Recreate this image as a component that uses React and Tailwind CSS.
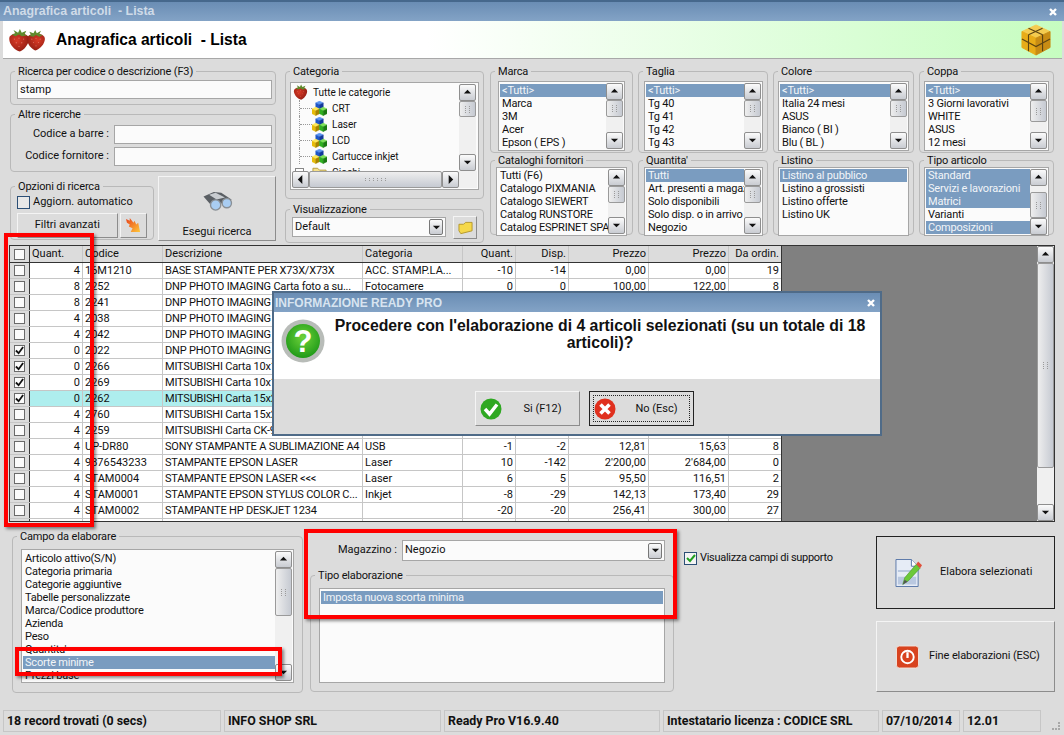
import React from "react";

const raised = "border border-t-[#f4f4f4] border-l-[#f4f4f4] border-r-[#8c8c8c] border-b-[#8c8c8c] bg-[#dcdcdc]";

function Strawberry({ className, id = "sb", flip }) {
  return (
    <svg viewBox="0 0 24 26" className={className}>
      <defs>
        <radialGradient id={id} cx="40%" cy="40%" r="70%">
          <stop offset="0%" stopColor="#d93a26" />
          <stop offset="100%" stopColor="#8e1c12" />
        </radialGradient>
      </defs>
      <g transform={flip ? "translate(24 0) scale(-1 1)" : undefined}>
        <path d="M2 9C6 4 18 4 22 9C25 15 18 24 13 25.500C7 25 -1 15 2 9Z" fill={`url(#${id})`} />
        <g fill="#f0a090" opacity="0.55">
          <circle cx="7" cy="12" r="0.700" /><circle cx="12" cy="11" r="0.700" /><circle cx="17" cy="12" r="0.700" />
          <circle cx="9" cy="16" r="0.700" /><circle cx="15" cy="16" r="0.700" /><circle cx="12" cy="20" r="0.700" />
        </g>
        <path d="M4 7L8 6L6 2L11 5L13 1L15 5L20 3L18 7L21 8L15 9L12 7L8 9Z" fill="#5e8a2c" />
      </g>
    </svg>
  );
}

function Cubes({ className }) {
  const cube = (x, y, a, b, c) => (
    <g transform={`translate(${x} ${y})`} strokeLinejoin="round">
      <path d="M0 2L4 0L8 2L4 4Z" fill={a} stroke={a} strokeWidth="0.500" />
      <path d="M0 2L4 4L4 9L0 7Z" fill={b} stroke={b} strokeWidth="0.500" />
      <path d="M8 2L4 4L4 9L8 7Z" fill={c} stroke={c} strokeWidth="0.500" />
    </g>
  );
  return (
    <svg viewBox="0 0 16 16" className={className}>
      {cube(4, 0, "#5a94f0", "#1f57c8", "#12389a")}
      {cube(0, 6.500, "#ffe85a", "#e8bc08", "#a88400")}
      {cube(8, 6.500, "#7fe05a", "#2fb020", "#1a7a12")}
    </svg>
  );
}

function Arrow({ dir }) {
  const d = { up: "M1 6L5 2L9 6Z", down: "M1 3L5 7L9 3Z", left: "M7 0L2 5L7 10Z", right: "M3 0L8 5L3 10Z" }[dir];
  return (
    <svg viewBox="0 0 10 10" className="w-[9px] h-[9px]">
      <path d={d} fill="#111" />
    </svg>
  );
}

function ScrollBtn({ dir, className = "w-full h-[17px]" }) {
  return (
    <div className={`${className} shrink-0 flex items-center justify-center rounded-[2px] border border-[#8e8e8e] bg-gradient-to-b from-[#fbfbfb] to-[#c9ccd2]`}>
      <Arrow dir={dir} />
    </div>
  );
}

function Dots({ wide }) {
  return (
    <div className={`grid gap-[1px] ${wide ? "grid-cols-6" : "grid-cols-2"}`}>
      {Array.from({ length: wide ? 12 : 8 }).map((_, i) => (
        <span key={i} className="w-[1px] h-[1px] bg-[#9a9a9a] mx-[1px]" />
      ))}
    </div>
  );
}

function VScroll({ top = "h-0", thumb = "h-[16px]", className = "w-[17px]" }) {
  return (
    <div className={`${className} shrink-0 flex flex-col bg-[#f0f0f0]`}>
      <ScrollBtn dir="up" />
      <div className={`${top} shrink-0`} />
      <div className={`${thumb} shrink-0 flex items-center justify-center rounded-[2px] border border-[#9a9a9a] bg-gradient-to-r from-[#eeeeee] to-[#c6cad2]`}>
        <Dots />
      </div>
      <div className="flex-1" />
      <ScrollBtn dir="down" />
    </div>
  );
}

function Group({ title, className = "", inner = "", children }) {
  return (
    <fieldset className={`border border-[#b9b9b9] rounded-[4px] min-w-0 ${className}`}>
      <legend className="ml-[4px] px-[3px] h-[13px] leading-[13px] text-[#111] tracking-[-0.15px]">{title}</legend>
      <div className={inner}>{children}</div>
    </fieldset>
  );
}

function ListBox({ items, selected = [], scroll, className = "", tight }) {
  return (
    <div className={`flex border border-[#a6a6a6] bg-[#fbfbfb] p-[1px] overflow-hidden tracking-[-0.2px] ${className}`}>
      <div className={`flex-1 min-w-0 overflow-hidden ${tight ? "" : "pt-[1px]"}`}>
        {items.map((t, i) => (
          <div
            key={i}
            className={`h-[13px] leading-[13px] pl-[2px] whitespace-nowrap overflow-hidden ${selected.includes(i) ? "bg-[#7a9cc0] text-[#f2f5f8]" : "text-[#111]"}`}
          >
            {t}
          </div>
        ))}
      </div>
      {scroll}
    </div>
  );
}

function Input({ value = "", className = "" }) {
  return <div className={`h-[19px] border border-[#a6a6a6] bg-[#fbfbfb] px-[2px] leading-[17px] ${className}`}>{value}</div>;
}

function Select({ value, className = "" }) {
  return (
    <div className={`flex items-center justify-between border border-[#a6a6a6] bg-[#fbfbfb] pl-[2px] pr-[2px] ${className}`}>
      <span>{value}</span>
      <div className="w-[14px] h-[16px] rounded-[2px] border border-[#777] bg-gradient-to-b from-[#fbfbfb] to-[#c9ccd2] flex items-center justify-center">
        <Arrow dir="down" />
      </div>
    </div>
  );
}

function TreeRow({ label }) {
  return (
    <div className="h-[16px] flex items-center pl-[7px]">
      <span className="w-[13px] h-full border-l border-dotted border-[#999] flex items-center">
        <span className="w-full border-t border-dotted border-[#999]" />
      </span>
      <Cubes className="w-[15px] h-[15px]" />
      <span className="ml-[5px]">{label}</span>
    </div>
  );
}

function CategoryTree() {
  return (
    <div className="mx-[4px] mt-[4px] h-[108px] border border-[#a6a6a6] bg-[#fbfbfb] p-[1px] flex flex-col text-[10px] overflow-hidden">
      <div className="flex flex-1 min-h-0">
        <div className="flex-1 overflow-hidden">
          <div className="h-[16px] flex items-center pl-[1px]">
            <Strawberry id="sb2" className="w-[15px] h-[16px]" />
            <span className="ml-[5px]">Tutte le categorie</span>
          </div>
          <TreeRow label="CRT" />
          <TreeRow label="Laser" />
          <TreeRow label="LCD" />
          <TreeRow label="Cartucce inkjet" />
          <div className="h-[16px] flex items-center pl-[3px]">
            <span className="w-[9px] h-[9px] mr-[8px] border border-[#888] bg-white" />
            <svg viewBox="0 0 16 14" className="w-[15px] h-[14px]"><path d="M1 3H6L8 5H15V13H1Z" fill="#f5e08a" stroke="#b39a3c" /></svg>
            <span className="ml-[5px]">Giochi</span>
          </div>
        </div>
        <VScroll className="w-[17px] mr-[1px]" thumb="h-[16px]" />
      </div>
      <div className="h-[17px] shrink-0 flex bg-[#f0f0f0]">
        <ScrollBtn dir="left" className="w-[17px] h-[17px]" />
        <div className="flex-1 flex items-center justify-center rounded-[2px] border border-[#9a9a9a] bg-gradient-to-b from-[#eeeeee] to-[#c6cad2]">
          <Dots wide />
        </div>
        <ScrollBtn dir="right" className="w-[17px] h-[17px]" />
        <div className="w-[18px]" />
      </div>
    </div>
  );
}

const rows = [
  { q: 4, c: "16M1210", d: "BASE STAMPANTE PER X73X/X73X", cat: "ACC. STAMP.LA...", a: "-10", b: "-14", p1: "0,00", p2: "0,00", o: "19" },
  { q: 8, c: "2252", d: "DNP PHOTO IMAGING Carta foto a su...", cat: "Fotocamere", a: "0", b: "0", p1: "100,00", p2: "122,00", o: "8" },
  { q: 8, c: "2241", d: "DNP PHOTO IMAGING Carta foto a su..." },
  { q: 4, c: "2038", d: "DNP PHOTO IMAGING Carta foto a su..." },
  { q: 4, c: "2042", d: "DNP PHOTO IMAGING Carta foto a su..." },
  { q: 0, c: "2022", d: "DNP PHOTO IMAGING Carta foto a su...", on: true },
  { q: 0, c: "2266", d: "MITSUBISHI Carta 10x15", on: true },
  { q: 0, c: "2269", d: "MITSUBISHI Carta 10x15", on: true },
  { q: 0, c: "2262", d: "MITSUBISHI Carta 15x20", on: true, hi: true },
  { q: 4, c: "2760", d: "MITSUBISHI Carta 15x20" },
  { q: 4, c: "2259", d: "MITSUBISHI Carta CK-9046" },
  { q: 4, c: "UP-DR80", d: "SONY STAMPANTE A SUBLIMAZIONE A4", cat: "USB", a: "-1", b: "-2", p1: "12,81", p2: "15,63", o: "8" },
  { q: 4, c: "9876543233", d: "STAMPANTE EPSON LASER", cat: "Laser", a: "10", b: "-142", p1: "2'200,00", p2: "2'684,00", o: "0" },
  { q: 4, c: "STAM0004", d: "STAMPANTE EPSON LASER <<<", cat: "Laser", a: "6", b: "5", p1: "95,50", p2: "116,51", o: "2" },
  { q: 4, c: "STAM0001", d: "STAMPANTE EPSON STYLUS COLOR C...", cat: "Inkjet", a: "-8", b: "-29", p1: "142,13", p2: "173,40", o: "29" },
  { q: 4, c: "STAM0002", d: "STAMPANTE HP DESKJET 1234", cat: "", a: "-20", b: "-20", p1: "256,41", p2: "300,00", o: "27" },
];

function Check({ on }) {
  return (
    <div className="w-[11px] h-[11px] mx-auto border border-[#6a6a6a] bg-[#fbfbfb] flex items-center justify-center">
      {on && (
        <svg viewBox="0 0 10 10" className="w-[9px] h-[9px]">
          <path d="M1 5L4 8L9 1" fill="none" stroke="#111" strokeWidth="2" />
        </svg>
      )}
    </div>
  );
}

const cols = "grid grid-cols-[20px_53px_80px_200px_100px_53px_53px_80px_80px_53px]";
const cell = "border-r border-[#c6c6c6] px-[2px] whitespace-nowrap overflow-hidden";

function Grid() {
  return (
    <div className="mx-[9px] h-[277px] shrink-0 border border-[#333] bg-[#808080] flex">
      <div className="w-[772px] shrink-0 bg-white overflow-hidden border-r border-[#333]">
        <div className={`${cols} h-[16px] leading-[15px] bg-[#dcdcdc] border-b border-[#333] box-content`}>
          <div className="border-r border-[#333] flex items-center"><Check /></div>
          <div className={`${cell}`}>Quant.</div>
          <div className={`${cell}`}>Codice</div>
          <div className={`${cell}`}>Descrizione</div>
          <div className={`${cell}`}>Categoria</div>
          <div className={`${cell} text-right`}>Quant.</div>
          <div className={`${cell} text-right`}>Disp.</div>
          <div className={`${cell} text-right`}>Prezzo</div>
          <div className={`${cell} text-right`}>Prezzo</div>
          <div className={`${cell} text-right`}>Da ordin.</div>
        </div>
        {rows.map((r, i) => (
          <div key={i} className={`${cols} h-[16px] leading-[15px] border-b border-[#c6c6c6] ${r.hi ? "bg-[#aeeeee]" : ""}`}>
            <div className="bg-[#dcdcdc] border-r border-[#333] flex items-center"><Check on={r.on} /></div>
            <div className={`${cell} text-right`}>{r.q}</div>
            <div className={cell}>{r.c}</div>
            <div className={`${cell} tracking-[-0.2px]`}>{r.d}</div>
            <div className={cell}>{r.cat}</div>
            <div className={`${cell} text-right`}>{r.a}</div>
            <div className={`${cell} text-right`}>{r.b}</div>
            <div className={`${cell} text-right`}>{r.p1}</div>
            <div className={`${cell} text-right`}>{r.p2}</div>
            <div className={`${cell} text-right`}>{r.o}</div>
          </div>
        ))}
        <div className={`${cols} h-[4px]`}>
          <div className="bg-[#dcdcdc] border-r border-[#333]" />
          {Array.from({ length: 9 }).map((_, i) => <div key={i} className="border-r border-[#c6c6c6]" />)}
        </div>
      </div>
      <div className="flex-1" />
      <VScroll className="w-[17px]" thumb="h-[205px]" />
    </div>
  );
}

function Dialog() {
  return (
    <div className="absolute left-[272px] top-[291px] w-[610px] h-[145px] border-2 border-[#4f6b88] flex flex-col bg-[#dcdcdc]">
      <div className="h-[19px] shrink-0 flex items-center justify-between pl-[1px] pr-[4px] bg-gradient-to-b from-[#6a8db4] to-[#83a3c6]">
        <span className="font-bold text-[12px] text-[#d8e4f0] font-['Liberation_Sans',sans-serif]">INFORMAZIONE READY PRO</span>
        <svg viewBox="0 0 10 10" className="w-[10px] h-[10px]"><path d="M2 2L8 8M8 2L2 8" stroke="#fff" strokeWidth="2.4" /></svg>
      </div>
      <div className="h-[67px] shrink-0 bg-white flex">
        <svg viewBox="0 0 44 44" className="w-[44px] h-[44px] ml-[7px] mt-[7px] shrink-0">
          <defs>
            <radialGradient id="qg" cx="50%" cy="40%" r="60%">
              <stop offset="0%" stopColor="#6ed23a" />
              <stop offset="100%" stopColor="#1f9a18" />
            </radialGradient>
          </defs>
          <circle cx="22" cy="22" r="21.5" fill="#b8bcb8" />
          <circle cx="22" cy="22" r="17" fill="url(#qg)" />
          <text x="22" y="33" textAnchor="middle" fontSize="31" fontWeight="bold" fill="#fff" fontFamily="Liberation Sans">?</text>
        </svg>
        <div className="flex-1 pl-[4px] pr-[9px] pt-[5px] text-center font-bold text-[15.8px] leading-[17px] text-[#111] font-['Liberation_Sans',sans-serif]">
          Procedere con l'elaborazione di 4 articoli selezionati (su un totale di 18 articoli)?
        </div>
      </div>
      <div className="flex-1 flex justify-center gap-[9px] pt-[12px] pl-[14px]">
        <div className={`${raised} w-[105px] h-[35px] flex items-center pl-[4px]`}>
          <svg viewBox="0 0 22 22" className="w-[22px] h-[22px]">
            <circle cx="11" cy="11" r="10.5" fill="#2fa822" />
            <path d="M5 11L9.5 16L17 6.5" fill="none" stroke="#fff" strokeWidth="3.4" />
          </svg>
          <span className="ml-[22px] mt-[1px]">Si (F12)</span>
        </div>
        <div className="w-[105px] h-[35px] border border-[#222] bg-[#dcdcdc] p-[3px]">
          <div className="h-full border border-dotted border-[#222] flex items-center">
            <svg viewBox="0 0 22 22" className="w-[22px] h-[22px]">
              <circle cx="11" cy="11" r="10.5" fill="#e0301e" />
              <path d="M6.5 6.5L15.5 15.5M15.5 6.5L6.5 15.5" stroke="#fff" strokeWidth="3.6" />
            </svg>
            <span className="ml-[20px] mt-[2px]">No (Esc)</span>
          </div>
        </div>
      </div>
    </div>
  );
}

const redBox = "absolute border-[4px] border-[#ff0000] shadow-[2px_2px_3px_rgba(0,0,0,0.45)]";

export default function App() {
  return (
    <div className="relative w-[1064px] h-[735px] overflow-hidden bg-[#dcdcdc] text-[#111] text-[11px] font-['Roboto',sans-serif] flex flex-col">
      {/* Title bar */}
      <div className="h-[21px] shrink-0 flex items-center justify-between pl-[3px] pr-[6px] border-t-2 border-[#46688c] bg-gradient-to-b from-[#6a8db4] to-[#83a3c6]">
        <span className="font-bold text-[12.4px] text-[#cfdbe8] font-['Liberation_Sans',sans-serif]">Anagrafica articoli&nbsp; - Lista</span>
        <svg viewBox="0 0 10 10" className="w-[10px] h-[10px]"><path d="M2 2L8 8M8 2L2 8" stroke="#fff" strokeWidth="2.4" /></svg>
      </div>

      {/* Header */}
      <div className="h-[38px] shrink-0 ml-[3px] mr-[2px] flex items-center border-b border-[#a8a8a8] bg-gradient-to-r from-white from-[40%] to-[#c6fdc0]">
        <Strawberry id="sb3" className="w-[22px] h-[24px] ml-[5px]" />
        <Strawberry id="sb4" flip className="w-[20px] h-[22px] -ml-[4px]" />
        <span className="ml-[10px] font-bold text-[15.6px] text-black font-['Liberation_Sans',sans-serif]">Anagrafica articoli&nbsp; - Lista</span>
        <svg viewBox="0 0 32 34" className="ml-auto mr-[11px] w-[30px] h-[32px]">
          <path d="M16 1L31 8L16 15L1 8Z" fill="#f4cc50" stroke="#f4cc50" strokeLinejoin="round" />
          <path d="M1 8L16 15L16 33L1 25Z" fill="#e8ac18" stroke="#e8ac18" strokeLinejoin="round" />
          <path d="M31 8L16 15L16 33L31 25Z" fill="#c88c14" stroke="#c88c14" strokeLinejoin="round" />
          <path d="M8 4.500L23 11.500M23 4.500L8 11.500M8 11.500V29M23 11.500V29M1 16L16 24L31 16" stroke="#5c4412" strokeWidth="1.200" fill="none" />
        </svg>
      </div>

      {/* Filters */}
      <div className="h-[186px] shrink-0 flex pl-[10px] pt-[6px]">
        <div className="w-[266px] shrink-0 flex flex-col gap-[3px]">
          <Group title="Ricerca per codice o descrizione (F3)" className="h-[40px]" inner="px-[6px]">
            <Input value="stamp" className="mt-[2px] w-[255px]" />
          </Group>
          <Group title="Altre ricerche" className="h-[64px]" inner="pr-[3px]">
            <div className="mt-[4px] flex items-center justify-end gap-[5px]">
              <span>Codice a barre :</span>
              <Input className="w-[158px]" />
            </div>
            <div className="mt-[3px] flex items-center justify-end gap-[5px]">
              <span>Codice fornitore :</span>
              <Input className="w-[158px]" />
            </div>
          </Group>
          <div className="flex gap-[4px] mt-[1px] items-end">
            <Group title="Opzioni di ricerca" className="w-[144px] h-[60px]" inner="px-[6px]">
              <div className="flex items-center gap-[3px] mt-[1px]">
                <div className="w-[13px] h-[13px] border border-[#2c4f76] bg-[#e8e8e8]" />
                <span>Aggiorn. automatico</span>
              </div>
              <div className="flex gap-[2px] mt-[2px]">
                <div className={`${raised} w-[103px] h-[25px] flex items-center justify-center`}>Filtri avanzati</div>
                <div className={`${raised} w-[28px] h-[25px] flex items-center justify-center`}>
                  <svg viewBox="0 0 16 16" className="w-[15px] h-[15px]">
                    <defs>
                      <linearGradient id="fl" x1="0" y1="0" x2="1" y2="1">
                        <stop offset="0%" stopColor="#e8401a" />
                        <stop offset="100%" stopColor="#ffc83a" />
                      </linearGradient>
                    </defs>
                    <path d="M0 1L4 3L4 0L8 5L9 3L11 7L13 5L15 15L5 15L7 11L3 9L4 7L1 5Z" fill="url(#fl)" />
                  </svg>
                </div>
              </div>
            </Group>
            <div className={`${raised} w-[118px] h-[65px] flex flex-col items-center pt-[14px] -mb-[1px]`}>
              <svg viewBox="0 0 32 22" className="w-[31px] h-[21px]">
                <path d="M1 6L12 1L20 2L31 9L29 13L8 14Z" fill="#5a5f64" />
                <path d="M7 4L14 2L24 7L15 9Z" fill="#c8ccd0" />
                <circle cx="14" cy="15" r="5.500" fill="#a9cdf2" stroke="#8a9096" strokeWidth="1.500" />
                <circle cx="26" cy="13" r="5" fill="#a9cdf2" stroke="#8a9096" strokeWidth="1.500" />
              </svg>
              <span className="mt-[12px]">Esegui ricerca</span>
            </div>
          </div>
        </div>

        <div className="w-[199px] shrink-0 ml-[9px] flex flex-col gap-[4px]">
          <Group title="Categoria" className="h-[134px]">
            <CategoryTree />
          </Group>
          <Group title="Visualizzazione" className="h-[40px]" inner="px-[6px]">
            <div className="flex items-start gap-[7px]">
              <Select value="Default" className="w-[155px] h-[20px] mt-[1px]" />
              <div className={`${raised} w-[24px] h-[23px] flex items-center justify-center`}>
                <svg viewBox="0 0 16 14" className="w-[15px] h-[14px]"><path d="M1 3H6L8 1H15V10L3 13L1 10Z" fill="#f5d84a" stroke="#b3962c" /></svg>
              </div>
            </div>
          </Group>
        </div>

        <div className="ml-[6px] w-[565px] shrink-0 grid grid-cols-[143px_130px_141px_135px] grid-rows-[89px_87px] gap-x-[5px] gap-y-[0px]">
          <Group title="Marca" className="h-[88px]" inner="px-[7px]">
            <ListBox className="h-[70px] mt-[3px]" items={["<Tutti>", "Marca", "3M", "Acer", "Epson ( EPS )"]} selected={[0]} scroll={<VScroll top="h-0" thumb="h-[17px]" />} />
          </Group>
          <Group title="Taglia" className="h-[88px]" inner="px-[4px]">
            <ListBox className="h-[70px] mt-[3px] ml-[1px]" items={["<Tutti>", "Tg 40", "Tg 41", "Tg 42", "Tg 43"]} selected={[0]} scroll={<VScroll thumb="h-[17px]" />} />
          </Group>
          <Group title="Colore" className="h-[88px]" inner="px-[4px]">
            <ListBox className="h-[70px] mt-[3px]" items={["<Tutti>", "Italia 24 mesi", "ASUS", "Bianco ( BI )", "Blu ( BL )"]} selected={[0]} scroll={<VScroll thumb="h-[17px]" />} />
          </Group>
          <Group title="Coppa" className="h-[88px]" inner="px-[4px]">
            <ListBox className="h-[70px] mt-[3px]" items={["<Tutti>", "3 Giorni lavorativi", "WHITE", "ASUS", "12 mesi"]} selected={[0]} scroll={<VScroll thumb="h-[22px]" />} />
          </Group>

          <Group title="Cataloghi fornitori" className="h-[81px]" inner="px-[5px]">
            <ListBox tight className="h-[69px]" items={["Tutti (F6)", "Catalogo PIXMANIA", "Catalogo SIEWERT", "Catalog RUNSTORE", "Catalog ESPRINET SPA"]} scroll={<VScroll thumb="h-[17px]" />} />
          </Group>
          <Group title="Quantita'" className="h-[81px]" inner="px-[4px]">
            <ListBox tight className="h-[69px] ml-[1px]" items={["Tutti", "Art. presenti a magazzino", "Solo disponibili", "Solo disp. o in arrivo", "Negozio"]} selected={[0]} scroll={<VScroll thumb="h-[17px]" />} />
          </Group>
          <Group title="Listino" className="h-[81px]" inner="px-[4px]">
            <ListBox tight className="h-[69px]" items={["Listino al pubblico", "Listino a grossisti", "Listino offerte", "Listino UK"]} selected={[0]} />
          </Group>
          <Group title="Tipo articolo" className="h-[81px]" inner="px-[4px]">
            <ListBox tight className="h-[69px]" items={["Standard", "Servizi e lavorazioni", "Matrici", "Varianti", "Composizioni"]} selected={[0, 1, 2, 4]} scroll={<VScroll top="h-[6px]" thumb="h-[26px]" />} />
          </Group>
        </div>
      </div>

      <Grid />

      {/* Bottom panel */}
      <div className="h-[190px] shrink-0 flex pl-[12px] pt-[8px]">
        <Group title="Campo da elaborare" className="w-[291px] h-[163px]" inner="px-[8px]">
          <ListBox
            className="h-[134px] mt-[6px]"
            items={["Articolo attivo(S/N)", "Categoria primaria", "Categorie aggiuntive", "Tabelle personalizzate", "Marca/Codice produttore", "Azienda", "Peso", "Quantita'", "Scorte minime", "Prezzi base"]}
            selected={[8]}
            scroll={<VScroll thumb="h-[48px]" />}
          />
        </Group>
        <div className="w-[364px] shrink-0 ml-[7px] flex flex-col">
          <div className="flex items-center justify-end h-[21px] mt-[10px] pr-[9px]">
            <span className="mr-[5px]">Magazzino :</span>
            <Select value="Negozio" className="w-[263px] h-[21px]" />
          </div>
          <Group title="Tipo elaborazione" className="h-[123px] mt-[8px]" inner="px-[8px]">
            <ListBox className="h-[95px] mt-[6px]" items={["Imposta nuova scorta minima"]} selected={[0]} />
          </Group>
        </div>
        <div className="ml-[10px] w-[192px] shrink-0 pt-[20px]">
          <div className="flex items-center gap-[3px]">
            <div className="w-[13px] h-[13px] border border-[#2c4f76] bg-[#f4f4f4] flex items-center justify-center">
              <svg viewBox="0 0 10 10" className="w-[10px] h-[10px]"><path d="M1 5L4 8L9 2" fill="none" stroke="#22a022" strokeWidth="2" /></svg>
            </div>
            <span className="tracking-[-0.3px]">Visualizza campi di supporto</span>
          </div>
        </div>
        <div className="w-[179px] shrink-0 flex flex-col gap-[12px] pt-[6px]">
          <div className="h-[73px] border border-[#222] bg-[#dcdcdc] flex items-center pl-[18px]">
            <svg viewBox="0 0 28 30" className="w-[27px] h-[30px]">
              <path d="M1 1H17L24 8V29H1Z" fill="#e6ecf6" stroke="#5a78a8" />
              <path d="M17 1V8H24" fill="#fff" stroke="#5a78a8" />
              <path d="M3 12H22V14H3ZM3 19H22V27H3Z" fill="#b9c8e0" />
              <path d="M8 27L10 20L22 6L26 10L14 23Z" fill="#6cc93a" stroke="#3b8a1e" strokeWidth="0.500" />
              <path d="M8 27L10 22L13 24Z" fill="#555" />
              <path d="M22 6L24 3L28 7L26 10Z" fill="#e0503a" />
            </svg>
            <span className="ml-[18px]">Elabora selezionati</span>
          </div>
          <div className={`${raised} h-[71px] flex items-center pl-[19px]`}>
            <svg viewBox="0 0 24 24" className="w-[23px] h-[24px]">
              <rect x="0.500" y="0.500" width="23" height="23" rx="3" fill="#d8431f" stroke="#f4e4dc" />
              <circle cx="12" cy="12" r="6.500" fill="none" stroke="#fff" strokeWidth="2" />
              <path d="M12 7V13" stroke="#fff" strokeWidth="2.400" />
            </svg>
            <span className="ml-[10px] tracking-[-0.1px]">Fine elaborazioni (ESC)</span>
          </div>
        </div>
      </div>

      {/* Status bar */}
      <div className="absolute left-0 right-0 bottom-[3px] h-[22px] pl-[3px] flex gap-[3px] font-bold text-[12.4px] leading-[20px]">
        <div className="w-[218px] border border-[#c6c6c6] pl-[3px]">18 record trovati (0 secs)</div>
        <div className="w-[217px] border border-[#c6c6c6] pl-[3px]">INFO SHOP SRL</div>
        <div className="w-[216px] border border-[#c6c6c6] pl-[3px]">Ready Pro V16.9.40</div>
        <div className="w-[216px] border border-[#c6c6c6] pl-[3px]">Intestatario licenza : CODICE SRL</div>
        <div className="w-[78px] border border-[#c6c6c6] pl-[3px]">07/10/2014</div>
        <div className="w-[78px] border border-[#c6c6c6] pl-[3px]">12.01</div>
        <div className="ml-[8px] self-end mb-[2px] w-[8px] h-[8px] border-r-2 border-b-2 border-dotted border-[#a8a8a8]" />
      </div>

      {/* Annotations */}
      <div className={`${redBox} left-[4px] top-[233px] w-[90px] h-[294px]`} />
      <div className={`${redBox} left-[15px] top-[647px] w-[267px] h-[29px]`} />
      <div className={`${redBox} left-[304px] top-[529px] w-[373px] h-[90px]`} />

      <Dialog />
    </div>
  );
}
